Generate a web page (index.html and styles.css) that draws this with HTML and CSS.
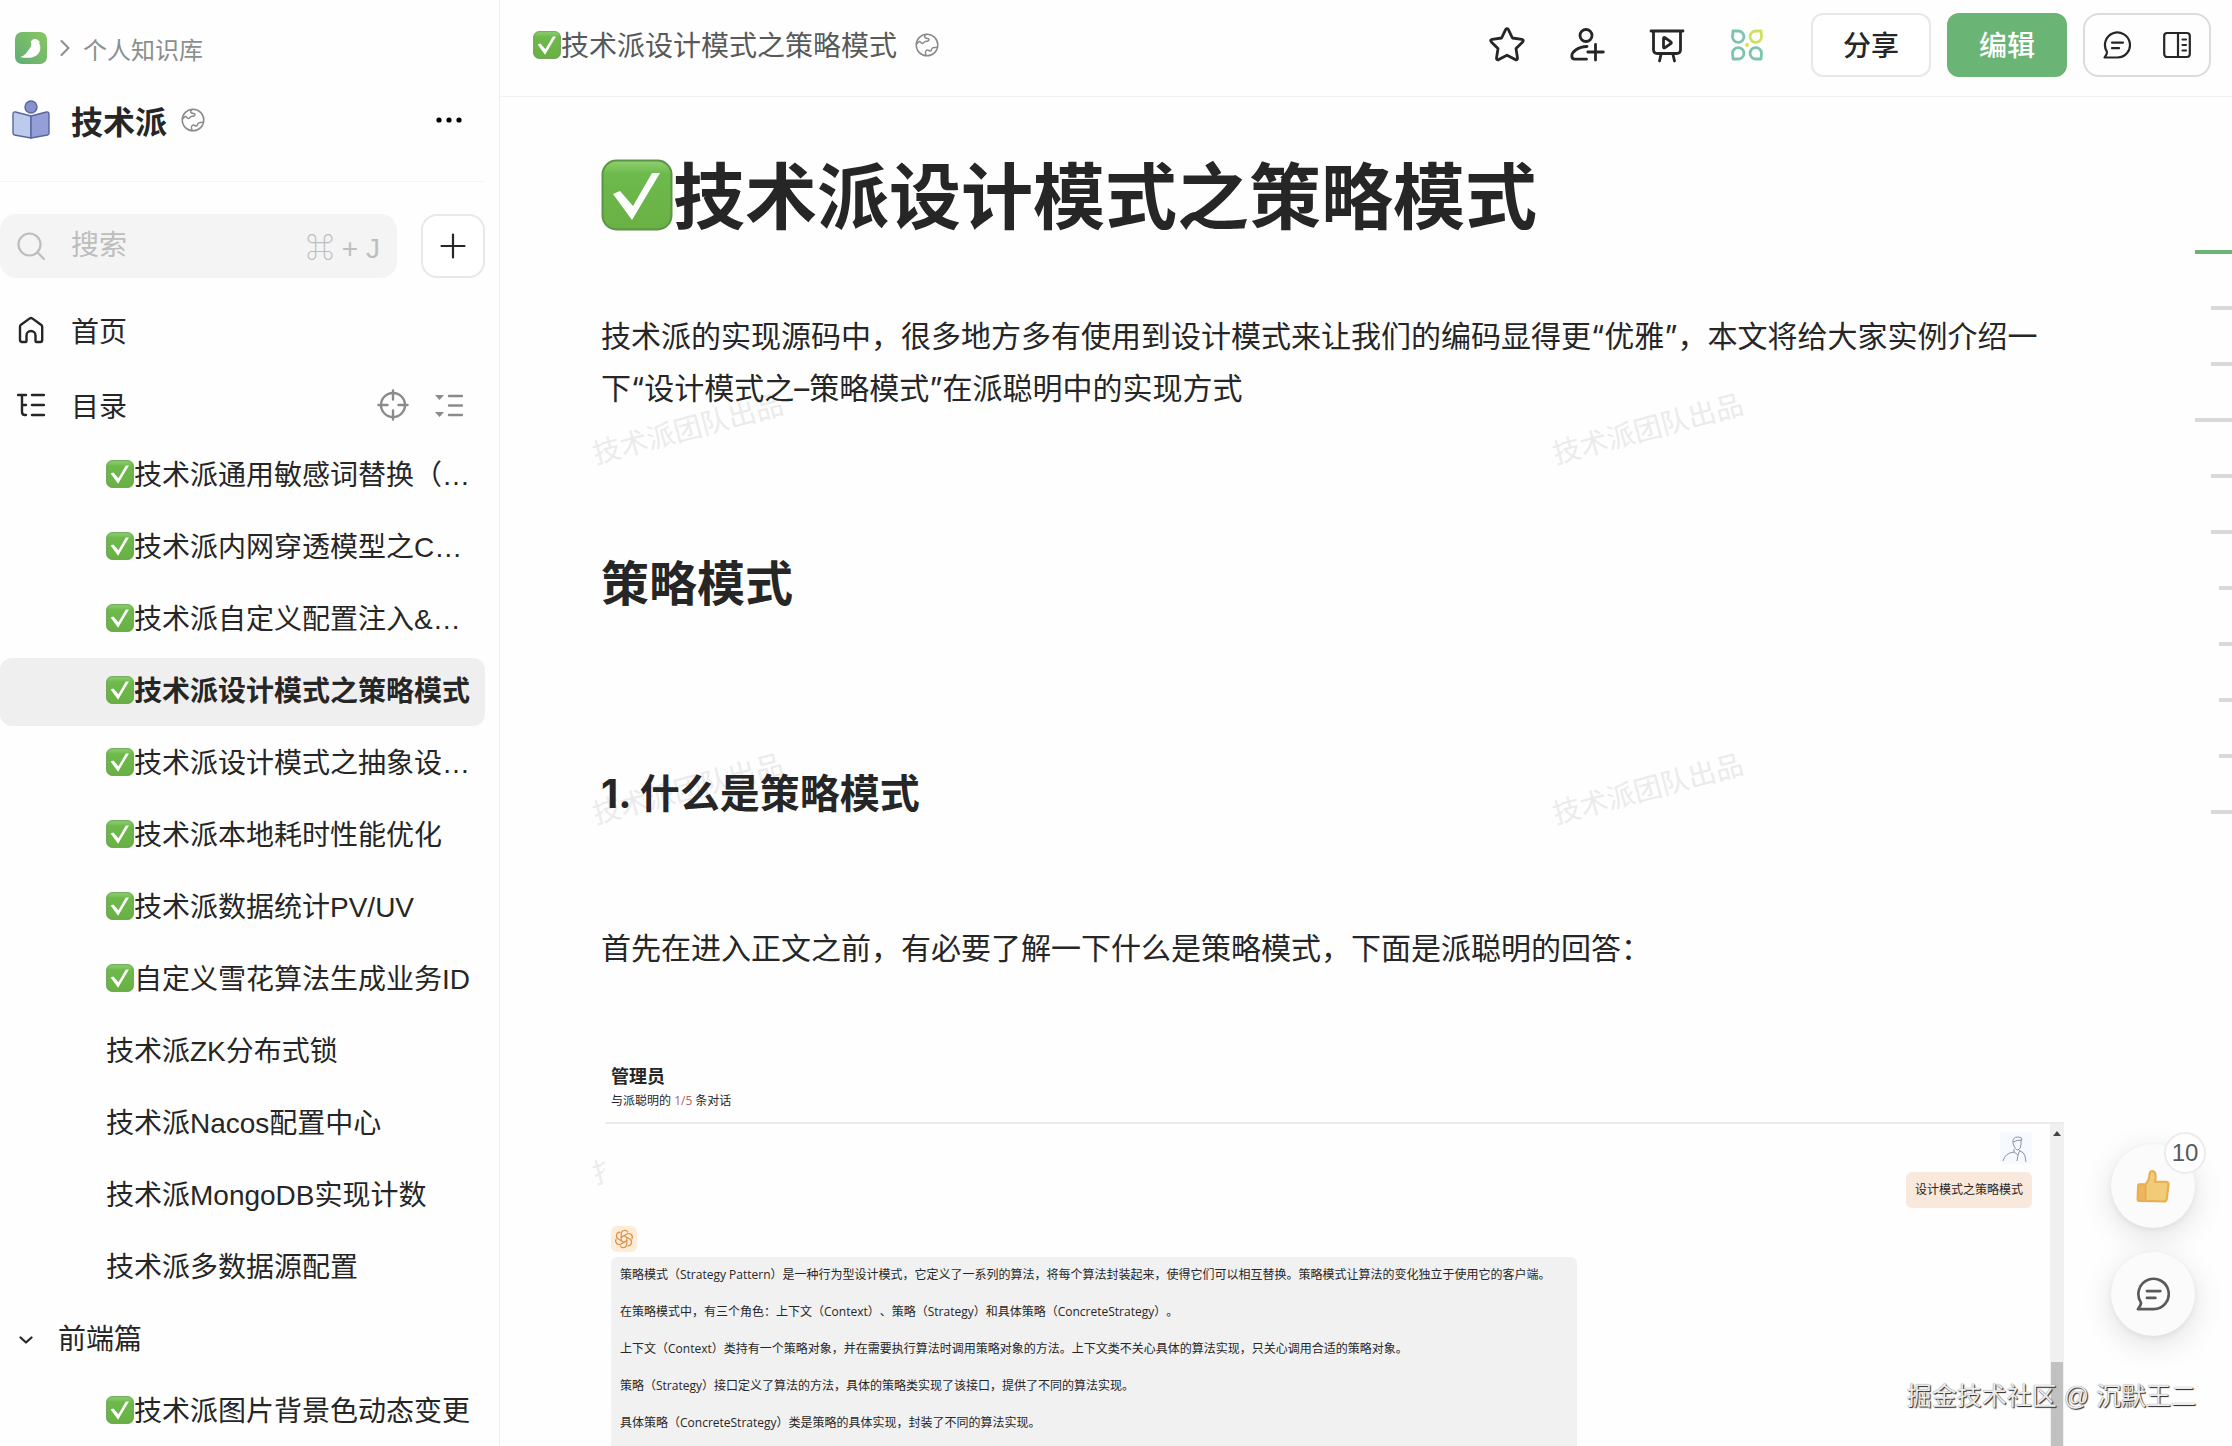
FILE: index.html
```html
<!DOCTYPE html>
<html lang="zh-CN">
<head>
  <meta charset="UTF-8" />
  <meta name="viewport" content="width=device-width, initial-scale=1.0"/>
  <title>技术派设计模式之策略模式</title>
  <link rel="stylesheet" href="styles.css">
</head>
<body>
  <!-- Shared icons -->
  <svg class="sprite" width="0" height="0" aria-hidden="true">
    <defs>
      <linearGradient id="check-fill" x1="0" y1="0" x2="0" y2="1">
        <stop offset="0" stop-color="#8fd070"/>
        <stop offset="0.2" stop-color="#6dba4c"/>
        <stop offset="1" stop-color="#6ab045"/>
      </linearGradient>
      <linearGradient id="logo-fill" x1="0" y1="1" x2="1" y2="0">
        <stop offset="0" stop-color="#5fae74"/>
        <stop offset="1" stop-color="#8ac663"/>
      </linearGradient>
    </defs>
    <symbol id="icon-check" viewBox="0 0 72 72">
      <rect x="1.5" y="1.5" width="69" height="69" rx="14" fill="url(#check-fill)" stroke="#5a9445" stroke-width="2"/>
      <path d="M12 35l7-3 13 15 19-33h8L31 61z" fill="#fff"/>
    </symbol>
    <symbol id="icon-globe" viewBox="0 0 24 24">
      <g fill="none" stroke="currentColor" stroke-width="1.5" stroke-linecap="round" stroke-linejoin="round">
        <circle cx="12" cy="12" r="10.8"/>
        <path d="M1.8 11c1.400-2.600 3-3 4-1.600s2.200 1.600 3.200 0 2.600-.8 4-1.400 1.200-2.400-.4-2.600-3-.6-3-2 .8-1.800 1.800-2"/>
        <path d="M11.200 22.400c-1-2-1-4.400.6-5.200s2.400 1 3.800.8.4-2.400 2-3.200 3 .2 4.400-.6"/>
      </g>
    </symbol>
    <symbol id="icon-comment" viewBox="0 0 28 28">
      <g fill="none" stroke="currentColor" stroke-width="2.200" stroke-linecap="round" stroke-linejoin="round">
        <path d="M14.500 26.500A12.500 12.500 0 1 0 3.800 20.500c.9 1.400-.2 3-2.200 6z"/>
        <path d="M9 11.600h11M9 17.200h7"/>
      </g>
    </symbol>
  </svg>

  <div class="app">
    <!-- Sidebar -->
    <aside class="sidebar">
      <nav class="crumbs">
        <a href="#" aria-label="语雀">
          <svg class="logo" viewBox="0 0 32 32">
            <rect width="32" height="32" rx="7" fill="url(#logo-fill)"/>
            <path d="M5 25c5-1 7-5 10-9 1.600-2 1.500-4 1-5-.4-2 1.500-4 4-4 1.500 0 3 .6 3.300 1.600L25 10l-1 1c2.500 4 1.500 9-2 12s-10 3.600-17 2z" fill="#fff"/>
          </svg>
        </a>
        <svg class="crumb-arrow" viewBox="0 0 10 18"><path d="M1.500 2l7 7-7 7" fill="none" stroke="currentColor" stroke-width="2" stroke-linecap="round" stroke-linejoin="round"/></svg>
        <a href="#">个人知识库</a>
      </nav>

      <div class="book">
        <svg class="book-icon" viewBox="0 0 38 40">
          <g stroke="#59659d" stroke-width="1.400" stroke-linejoin="round">
            <path d="M1 14q0-2.500 2.500-2L19 16v22L2.500 35Q1 34.600 1 33z" fill="#bccbec"/>
            <path d="M37 14q0-2.500-2.500-2L19 16v22l16.500-3q1.500-.4 1.500-2z" fill="#949fd8"/>
            <circle cx="19" cy="7" r="6" fill="#8591d0"/>
          </g>
        </svg>
        <h2>技术派</h2>
        <svg class="globe"><use href="#icon-globe"/></svg>
        <button class="icon-button more" aria-label="更多">
          <svg viewBox="0 0 26 6"><circle cx="3" cy="3" r="2.600"/><circle cx="13" cy="3" r="2.600"/><circle cx="23" cy="3" r="2.600"/></svg>
        </button>
      </div>

      <div class="search-row">
        <label class="search">
          <svg class="menu-icon" viewBox="0 0 28 28"><g fill="none" stroke="currentColor" stroke-width="2.200" stroke-linecap="round"><circle cx="12.500" cy="12.500" r="11"/><path d="M20.500 20.500l6.500 6.500"/></g></svg>
          <input type="text" placeholder="搜索" aria-label="搜索">
          <kbd>⌘ + J</kbd>
        </label>
        <button class="add-button" aria-label="新建">
          <svg viewBox="0 0 26 26"><path d="M13 1.500v23M1.500 13h23" stroke="currentColor" stroke-width="2.200" stroke-linecap="round"/></svg>
        </button>
      </div>

      <a class="menu-row" href="#">
        <svg class="menu-icon" viewBox="0 0 28 28"><path d="M3 10.500Q3 9.500 4 8.800L12.800 2.400q1.200-.8 2.400 0L24 8.800q1.200.8 1.200 1.900V24q0 2-2 2h-3.700q-1 0-1-1v-5.500a4.500 4.500 0 0 0-9 0V25q0 1-1 1H5q-2 0-2-2z" fill="none" stroke="currentColor" stroke-width="2.400" stroke-linejoin="round"/></svg>
        首页
      </a>
      <div class="menu-row">
        <svg class="menu-icon" viewBox="0 0 28 28"><path d="M1 4h8M5 4v17q0 3 3 3h1M5 14h4M15 4h12M15 14h12M15 24h12" fill="none" stroke="currentColor" stroke-width="2.400" stroke-linecap="round"/></svg>
        目录
        <div class="menu-actions">
          <button class="icon-button" aria-label="定位当前文档">
            <svg class="locate" viewBox="0 0 32 32"><g fill="none" stroke="currentColor" stroke-width="2.400" stroke-linecap="round"><circle cx="16" cy="16" r="12"/><path d="M16 1.500v9M16 21.500v9M1.500 16h9M21.500 16h9"/></g></svg>
          </button>
          <button class="icon-button" aria-label="展开目录">
            <svg class="menu-icon" viewBox="0 0 28 28"><path d="M14 5h13M14 14.500h13M14 24h13" stroke="currentColor" stroke-width="2.400" stroke-linecap="round"/><path d="M0 4h9L4.500 9zM0 21h9l-4.500 5z" fill="currentColor"/></svg>
          </button>
        </div>
      </div>

      <ul class="toc">
        <li><a href="#"><svg class="check"><use href="#icon-check"/></svg>技术派通用敏感词替换（…</a></li>
        <li><a href="#"><svg class="check"><use href="#icon-check"/></svg>技术派内网穿透模型之C…</a></li>
        <li><a href="#"><svg class="check"><use href="#icon-check"/></svg>技术派自定义配置注入&amp;…</a></li>
        <li><a class="active" href="#"><svg class="check"><use href="#icon-check"/></svg>技术派设计模式之策略模式</a></li>
        <li><a href="#"><svg class="check"><use href="#icon-check"/></svg>技术派设计模式之抽象设…</a></li>
        <li><a href="#"><svg class="check"><use href="#icon-check"/></svg>技术派本地耗时性能优化</a></li>
        <li><a href="#"><svg class="check"><use href="#icon-check"/></svg>技术派数据统计PV/UV</a></li>
        <li><a href="#"><svg class="check"><use href="#icon-check"/></svg>自定义雪花算法生成业务ID</a></li>
        <li><a href="#">技术派ZK分布式锁</a></li>
        <li><a href="#">技术派Nacos配置中心</a></li>
        <li><a href="#">技术派MongoDB实现计数</a></li>
        <li><a href="#">技术派多数据源配置</a></li>
        <li><a class="group" href="#"><svg class="caret" viewBox="0 0 14 8"><path d="M1.500 1.500L7 6.500l5.500-5" fill="none" stroke="currentColor" stroke-width="2.200" stroke-linecap="round" stroke-linejoin="round"/></svg>前端篇</a></li>
        <li><a href="#"><svg class="check"><use href="#icon-check"/></svg>技术派图片背景色动态变更</a></li>
      </ul>
    </aside>

    <!-- Document -->
    <main class="main">
      <header class="topbar">
        <div class="doc-name"><svg class="check"><use href="#icon-check"/></svg>技术派设计模式之策略模式</div>
        <svg class="globe"><use href="#icon-globe"/></svg>

        <div class="tools">
          <button class="icon-button" aria-label="收藏">
            <svg viewBox="0 0 36 36"><path d="M16.600 2.600q1.400-1.800 2.800 0l4 8.400 9.400 1.300q2.400.7.900 2.600L27 21.500l1.500 9.600q0 2.400-2.200 1.500L18 28.200l-8.300 4.400q-2.200.9-2.200-1.500L9 21.500l-6.700-6.600q-1.500-1.900.9-2.600l9.400-1.300z" fill="none" stroke="currentColor" stroke-width="2.800" stroke-linejoin="round"/></svg>
          </button>
          <button class="icon-button" aria-label="添加协作者">
            <svg viewBox="0 0 36 36"><g fill="none" stroke="currentColor" stroke-width="2.800" stroke-linecap="round"><circle cx="17" cy="8.500" r="6"/><path d="M18 19.500C9 19.500 2.800 25 2.800 29q0 3.200 3.200 3.200H17.500M26.500 17.500v15.500M18.800 25h15.500"/></g></svg>
          </button>
          <button class="icon-button" aria-label="演示">
            <svg viewBox="0 0 36 36"><g fill="none" stroke="currentColor" stroke-width="2.800" stroke-linecap="round" stroke-linejoin="round"><path d="M2 4h32M4.500 4v18.500q0 4 4 4h19q4 0 4-4V4M12 27.500L10.500 34M24 27.500l1.500 6.500"/><path d="M14.500 11.500q0-1.800 1.500-.8l5.800 4.100q1.200.9 0 1.800L16 20.600q-1.500 1-1.500-.8z"/></g></svg>
          </button>
          <button class="icon-button" aria-label="小工具">
            <svg viewBox="0 0 36 36"><g fill="none" stroke="#7cc5ab" stroke-width="2.800" stroke-linejoin="round"><path d="M4 4h5a5.700 5.700 0 1 1-5.500 5.700z"/><path d="M4 32h5a5.700 5.700 0 1 0-5.500-5.700z"/><path d="M32 32h-5a5.700 5.700 0 1 1 5.500-5.700z"/><path d="M32 4h-5a5.700 5.700 0 1 0 5.500 5.700z" stroke="#cbe35c"/></g><circle cx="18" cy="18" r="2" fill="#e3dc4b"/></svg>
          </button>
        </div>

        <div class="buttons">
          <button class="btn">分享</button>
          <button class="btn btn-primary">编辑</button>
          <div class="btn-group">
            <button class="icon-button" aria-label="评论"><svg class="menu-icon"><use href="#icon-comment"/></svg></button>
            <button class="icon-button" aria-label="侧栏">
              <svg class="menu-icon" viewBox="0 0 28 28"><g fill="none" stroke="currentColor" stroke-width="2.200" stroke-linecap="round"><rect x="1.200" y="2" width="25.600" height="24" rx="3"/><path d="M15 2v24M19.500 8.500h3.500M19.500 14h3.500M19.500 19.500h3.500"/></g></svg>
            </button>
          </div>
        </div>
      </header>

      <div class="page">
        <div class="watermarks" aria-hidden="true">
          <span>技术派团队出品</span><span>技术派团队出品</span>
          <span>技术派团队出品</span><span>技术派团队出品</span>
          <span>技术派团队出品</span>
        </div>

        <article class="article">
          <h1><svg class="check"><use href="#icon-check"/></svg>技术派设计模式之策略模式</h1>
          <p>技术派的实现源码中，很多地方多有使用到设计模式来让我们的编码显得更“优雅”，本文将给大家实例介绍一下“设计模式之–策略模式”在派聪明中的实现方式</p>
          <h2>策略模式</h2>
          <h3>1. 什么是策略模式</h3>
          <p class="lead">首先在进入正文之前，有必要了解一下什么是策略模式，下面是派聪明的回答：</p>

          <!-- Chat -->
          <section class="chat">
            <div class="chat-head">
              <strong>管理员</strong>
              <span>与派聪明的 <em>1/5</em> 条对话</span>
            </div>
            <div class="chat-body">
              <div class="messages">
                <div class="question">
                  <svg class="user-avatar" viewBox="0 0 32 32"><rect width="32" height="32" rx="4" fill="#f6f9fe"/><g fill="none" stroke="#8a94a8" stroke-width="1"><path d="M13 11q-1-6 5-6 4 0 4 2l-1 2M13 10q4-2 8-2v4q0 5-3 6-3 0-5-7M14 17v3l4 3 2-5M14 20q-9 1-11 9M20 19q4 1 5 5l1 6M18 23l-1 6"/></g></svg>
                  <div class="bubble">设计模式之策略模式</div>
                </div>
                <svg class="bot-avatar" viewBox="0 0 26 26"><rect width="26" height="26" rx="6" fill="#fdecd8"/><g fill="none" stroke="#d99248" stroke-width="1.200" stroke-linecap="round"><path id="petal" d="M10.200 14.600V8a3.600 3.600 0 0 1 6.600-2"/><use href="#petal" transform="rotate(60 13 13)"/><use href="#petal" transform="rotate(120 13 13)"/><use href="#petal" transform="rotate(180 13 13)"/><use href="#petal" transform="rotate(240 13 13)"/><use href="#petal" transform="rotate(300 13 13)"/></g></svg>
                <div class="answer">
                  <p>策略模式（Strategy Pattern）是一种行为型设计模式，它定义了一系列的算法，将每个算法封装起来，使得它们可以相互替换。策略模式让算法的变化独立于使用它的客户端。</p>
                  <p>在策略模式中，有三个角色：上下文（Context）、策略（Strategy）和具体策略（ConcreteStrategy）。</p>
                  <p>上下文（Context）类持有一个策略对象，并在需要执行算法时调用策略对象的方法。上下文类不关心具体的算法实现，只关心调用合适的策略对象。</p>
                  <p>策略（Strategy）接口定义了算法的方法，具体的策略类实现了该接口，提供了不同的算法实现。</p>
                  <p>具体策略（ConcreteStrategy）类是策略的具体实现，封装了不同的算法实现。</p>
                </div>
              </div>
              <div class="scroll-track">
                <svg viewBox="0 0 8 5"><path d="M0 5l4-5 4 5z" fill="#444"/></svg>
                <div class="scroll-thumb"></div>
              </div>
            </div>
          </section>
        </article>

        <!-- Outline marks -->
        <div class="outline">
          <i class="level-1 current"></i><i class="level-2"></i><i class="level-2"></i><i class="level-1"></i>
          <i class="level-2"></i><i class="level-2"></i><i class="level-3"></i><i class="level-3"></i>
          <i class="level-3"></i><i class="level-3"></i><i class="level-2"></i>
        </div>
      </div>

      <div class="floating">
        <button class="round-button" aria-label="点赞">
          <svg viewBox="0 0 32 32"><g fill="#f0cb78" stroke="#e9ae51" stroke-width="2" stroke-linejoin="round"><path d="M2 15.500q0-1 1-1h6V30H3q-1.500 0-1.500-1.500z" fill="#ecb75c"/><path d="M9 14.500q3-3 3.500-7.500.3-5 2.500-5 3.500 0 3.500 5 0 3-.8 5H28q2.800 0 2.600 2.500L29 28q-.4 2.600-3 2.600L9 30z"/></g></svg>
          <span class="badge">10</span>
        </button>
        <button class="round-button" aria-label="评论">
          <svg><use href="#icon-comment"/></svg>
        </button>
      </div>
      <div class="signature">掘金技术社区 @ 沉默王二</div>
    </main>
  </div>
</body>
</html>
```
FILE: styles.css
```css
* { margin: 0; padding: 0; box-sizing: border-box; }
body {
  font-family: "Liberation Sans", "Noto Sans CJK SC", "DejaVu Sans", sans-serif;
  font-size: 28px;
  color: #262626;
  background: #fefefe;
}

a { color: inherit; text-decoration: none; }
button { font: inherit; color: inherit; cursor: pointer; }
svg { display: block; flex: none; }
.sprite { position: absolute; }

.app {
  display: flex;
  height: 100vh;
  overflow: hidden;
}

.icon-button {
  display: flex;
  background: none;
  border: none;
}

.check {
  display: inline-block;
  width: 1em;
  height: 1em;
  vertical-align: -3px;
}

.globe {
  width: 24px;
  height: 24px;
  color: #8a8a8a;
}

.menu-icon { width: 28px; height: 28px; }

/* Sidebar */
.sidebar {
  flex: none;
  width: 500px;
  padding-right: 14px;
  border-right: 1px solid #ededed;
}

.crumbs {
  display: flex;
  align-items: center;
  gap: 13px;
  height: 48px;
  margin-top: 24px;
  padding-left: 15px;
  font-size: 24px;
  color: #8a8f8d;
}

.logo { width: 32px; height: 32px; }
.crumb-arrow { width: 10px; height: 18px; }

.book {
  display: flex;
  align-items: center;
  height: 110px;
  padding: 0 23px 14px 12px;
  border-bottom: 1px solid #f4f4f4;
}

.book-icon { width: 38px; height: 40px; margin-right: 21px; }
.book h2 { font-size: 32px; margin-right: 14px; }
.more { margin-left: auto; color: #000; }
.more svg { width: 26px; height: 6px; }

.search-row {
  display: flex;
  gap: 24px;
  margin: 32px 0 14px;
}

.search {
  flex: 1;
  min-width: 0;
  display: flex;
  align-items: center;
  height: 64px;
  padding: 0 17px;
  border-radius: 16px;
  background: #f4f4f4;
  color: #bdbdbd;
}

.search input {
  flex: 1;
  width: 0;
  margin-left: 26px;
  border: none;
  outline: none;
  background: none;
  font: inherit;
}

.search input::placeholder { color: #bdbdbd; }
.search kbd { font: inherit; }

.add-button {
  flex: none;
  display: flex;
  align-items: center;
  justify-content: center;
  width: 64px;
  height: 64px;
  border: 2px solid #e8e8e8;
  border-radius: 16px;
  background: #fff;
}

.add-button svg { width: 26px; height: 26px; }

.menu-row {
  display: flex;
  align-items: center;
  gap: 26px;
  height: 75px;
  padding: 0 22px 0 17px;
}

.menu-actions {
  display: flex;
  align-items: center;
  gap: 26px;
  margin-left: auto;
  color: #8a8a8a;
}

.locate { width: 32px; height: 32px; }

.toc { list-style: none; }

.toc a {
  display: block;
  height: 68px;
  margin-bottom: 4px;
  padding-left: 106px;
  line-height: 68px;
  border-radius: 12px;
  white-space: nowrap;
}

.toc .active {
  background: #efefef;
  font-weight: bold;
}

.toc .group {
  display: flex;
  align-items: center;
  gap: 25px;
  padding-left: 19px;
}

.caret { width: 14px; height: 8px; }

/* Top bar */
.main {
  flex: 1;
  min-width: 0;
  position: relative;
  display: flex;
  flex-direction: column;
}

.topbar {
  display: flex;
  align-items: center;
  height: 97px;
  padding: 0 21px 6px 33px;
  border-bottom: 1px solid #f1f1f1;
  flex: none;
}

.doc-name {
  margin-right: 18px;
  padding-bottom: 3px;
  color: #585a5a;
}

.tools {
  display: flex;
  gap: 44px;
  margin-left: auto;
  margin-right: 46px;
}

.tools svg { width: 36px; height: 36px; }

.buttons { display: flex; gap: 16px; }

.btn {
  width: 120px;
  height: 64px;
  padding-bottom: 2px;
  border: 2px solid #e8e8e8;
  border-radius: 12px;
  background: #fff;
  font-weight: 500;
}

.btn-primary {
  background: #6ab476;
  border-color: #6ab476;
  color: #fff;
}

.btn-group {
  display: flex;
  align-items: center;
  justify-content: space-between;
  width: 128px;
  height: 64px;
  padding: 0 18px;
  border: 2px solid #dcdcdc;
  border-radius: 16px;
}

/* Article */
.page {
  flex: 1;
  min-height: 0;
  position: relative;
  display: flex;
  overflow: hidden;
}

.watermarks {
  position: absolute;
  top: 313px;
  left: 90px;
  display: grid;
  grid-template-columns: 960px 960px;
  grid-auto-rows: 360px;
  color: #ebebeb;
  line-height: 40px;
}

.watermarks span {
  width: 196px;
  height: 40px;
  transform: rotate(-15deg);
}

.article {
  flex: 1;
  min-width: 0;
  position: relative;
  padding: 50px 131px 0 101px;
  font-family: Inter, "Noto Sans CJK SC", sans-serif;
  font-size: 30px;
  line-height: 52px;
}

.article h1 {
  font-size: 72px;
  line-height: 100px;
  margin-bottom: 63px;
}

.article h1 .check { vertical-align: -8px; }

.article h2 {
  font-size: 48px;
  line-height: 64px;
  margin-top: 138px;
}

.article h3 {
  font-size: 40px;
  line-height: 56px;
  margin-top: 150px;
}

.lead { margin-top: 100px; }

/* Chat */
.chat {
  margin: 81px 0 0 4px;
  background: #fefefe;
  font-family: "Open Sans", "Noto Sans CJK SC", sans-serif;
  font-size: 12px;
  line-height: 24px;
  text-spacing-trim: space-all;
}

.chat-head {
  display: flex;
  flex-direction: column;
  height: 69px;
  padding: 8px 6px 0;
  border-bottom: 2px solid #ebebeb;
}

.chat-head strong { font-size: 18px; line-height: 26px; }
.chat-head em { font-style: normal; color: #b0626a; }

.chat-body { display: flex; height: 600px; }
.messages { flex: 1; padding: 8px 18px 0 6px; }

.question {
  display: flex;
  flex-direction: column;
  align-items: flex-end;
  gap: 8px;
}

.user-avatar { width: 32px; height: 32px; }

.bubble {
  padding: 6px 9px;
  border-radius: 6px;
  background: #f9e8dc;
}

.bot-avatar { width: 26px; height: 26px; margin: 18px 0 5px; }

.answer {
  width: 68%;
  height: 400px;
  padding: 6px 9px;
  border-radius: 6px;
  background: #f1f1f1;
}

.answer p { margin-bottom: 13px; white-space: nowrap; }

.scroll-track {
  display: flex;
  flex-direction: column;
  align-items: center;
  width: 14px;
  padding-top: 7px;
  background: #f0f0f0;
}

.scroll-track svg { width: 8px; height: 5px; }

.scroll-thumb {
  width: 12px;
  height: 300px;
  margin-top: 226px;
  background: #c1c1c1;
}

/* Outline marks */
.outline {
  display: flex;
  flex-direction: column;
  align-items: flex-end;
  gap: 52px;
  width: 37px;
  padding-top: 153px;
}

.outline i { height: 4px; background: #d9d9d9; }
.outline .level-1 { width: 37px; }
.outline .level-2 { width: 21px; }
.outline .level-3 { width: 13px; }
.outline .current { background: #6ab476; }

/* Floating buttons */
.floating {
  position: absolute;
  right: 37px;
  bottom: 110px;
  display: flex;
  flex-direction: column;
  gap: 24px;
}

.round-button {
  position: relative;
  display: flex;
  align-items: center;
  justify-content: center;
  width: 84px;
  height: 84px;
  border: none;
  border-radius: 50%;
  background: #fbfbfb;
  color: #585a5a;
  box-shadow: 0 8px 32px rgba(0, 0, 0, 0.12), 0 2px 6px rgba(0, 0, 0, 0.06);
}

.round-button svg { width: 34px; height: 34px; }

.badge {
  position: absolute;
  top: -12px;
  right: -11px;
  width: 42px;
  height: 42px;
  line-height: 38px;
  border: 2px solid #ececec;
  border-radius: 50%;
  background: #fff;
  font-size: 24px;
}

.signature {
  position: absolute;
  right: 36px;
  bottom: 32px;
  font-size: 25px;
  line-height: 36px;
  color: #ececec;
  text-shadow: 1px 1px 1px #222, 0 0 1px #777;
}
```
